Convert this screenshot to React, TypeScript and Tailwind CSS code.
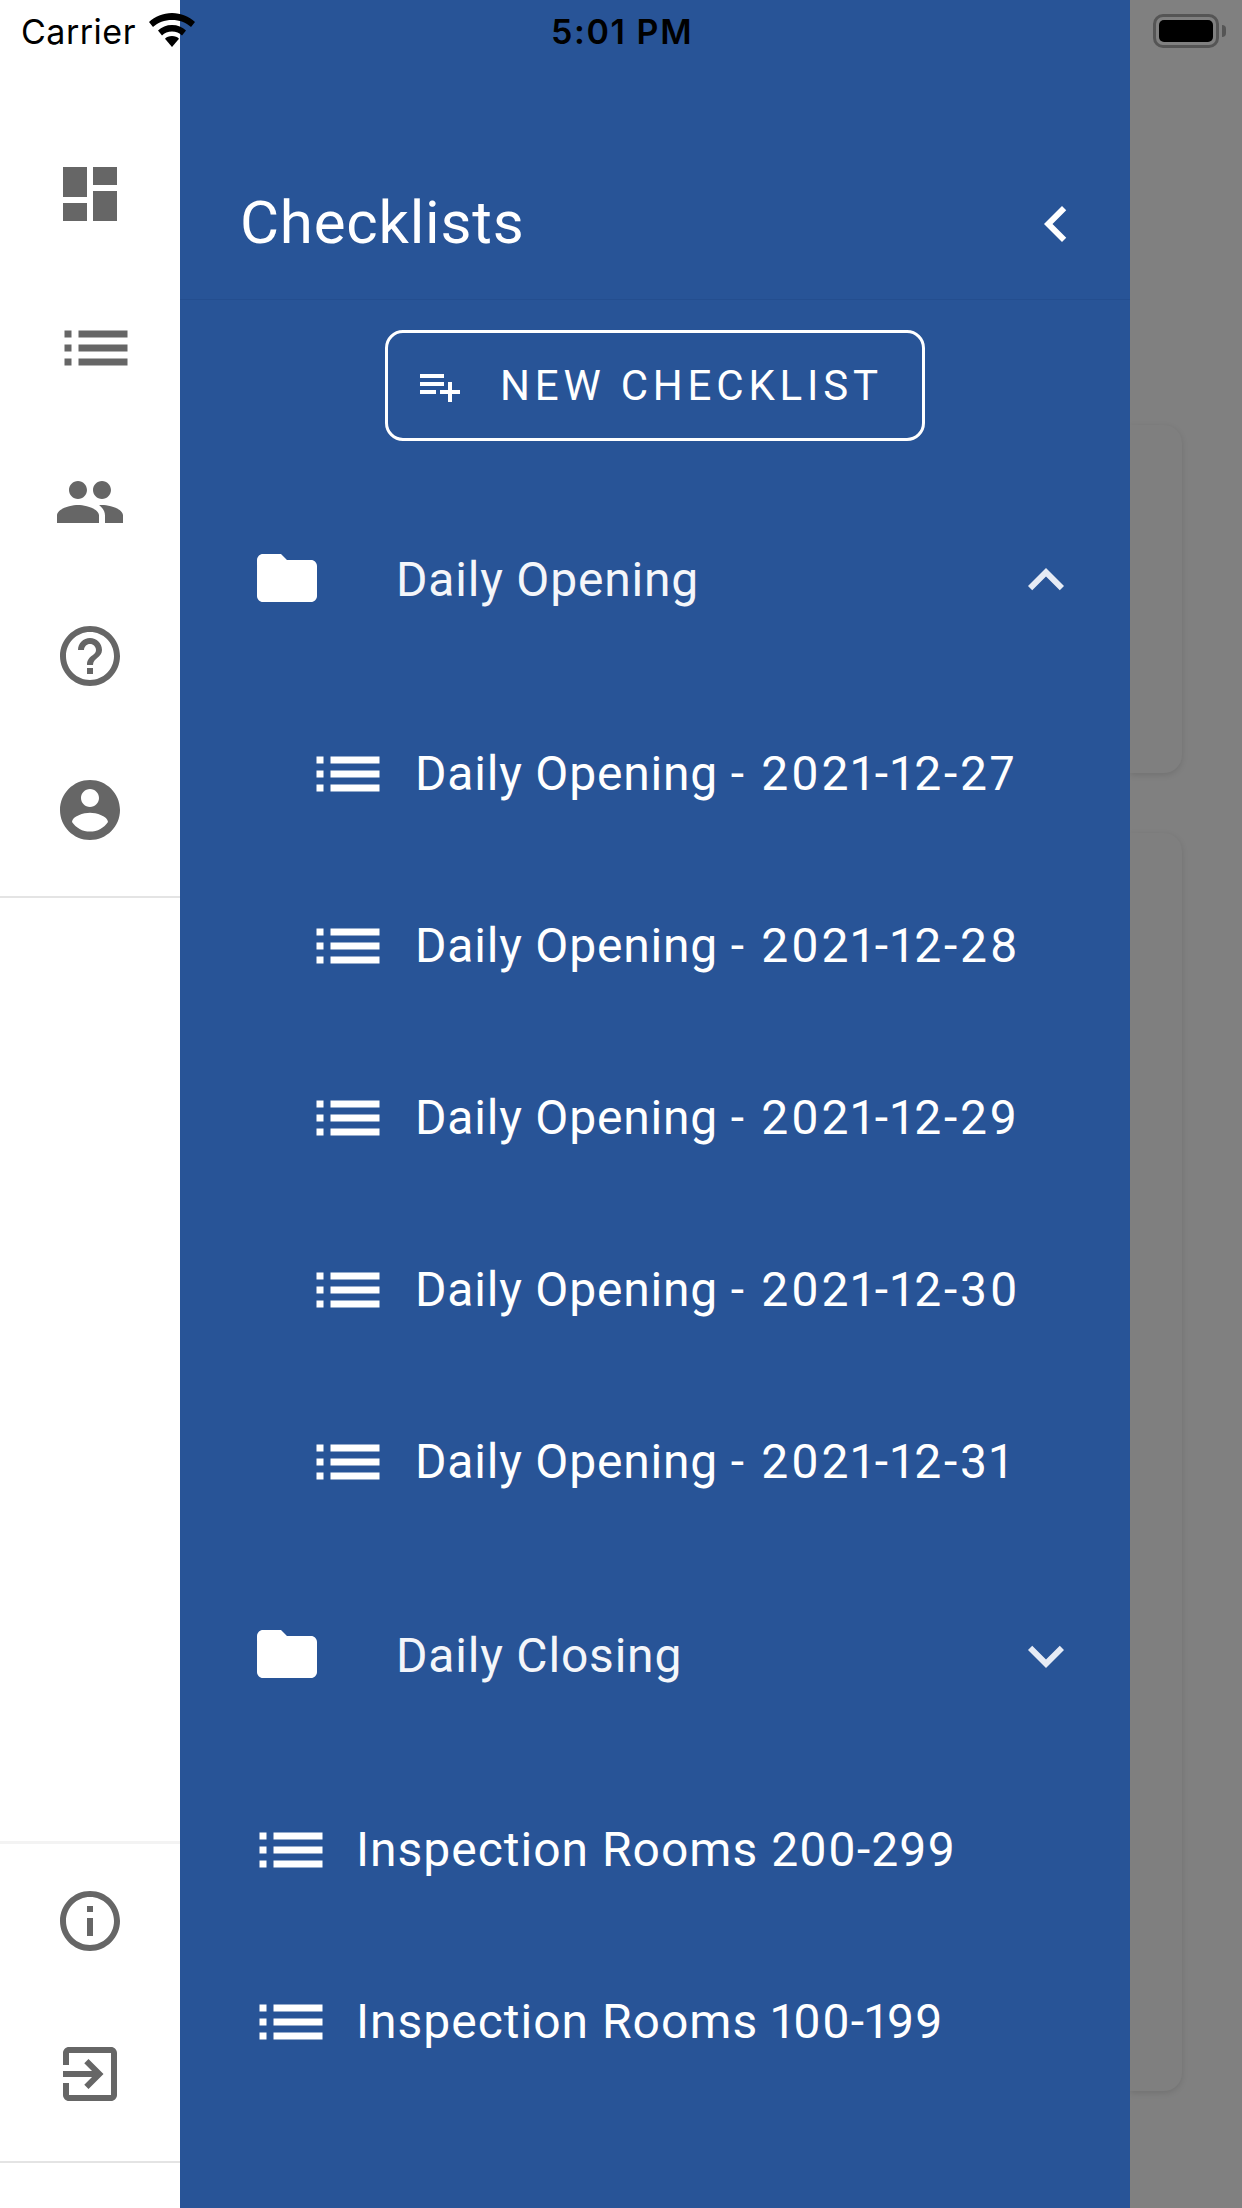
import React from 'react'

const ICONS = {
  dashboard: 'M3 13h8V3H3v10zm0 8h8v-6H3v6zm10 0h8V11h-8v10zm0-18v6h8V3h-8z',
  list: 'M3 13h2v-2H3v2zm0 4h2v-2H3v2zm0-8h2V7H3v2zm4 4h14v-2H7v2zm0 4h14v-2H7v2zM7 7v2h14V7H7z',
  people: 'M16 11c1.66 0 2.99-1.34 2.99-3S17.66 5 16 5c-1.66 0-3 1.34-3 3s1.34 3 3 3zm-8 0c1.66 0 2.99-1.34 2.99-3S9.66 5 8 5C6.34 5 5 6.34 5 8s1.34 3 3 3zm0 2c-2.33 0-7 1.17-7 3.5V19h14v-2.5c0-2.33-4.67-3.5-7-3.5zm8 0c-.29 0-.62.02-.97.05 1.16.84 1.97 1.97 1.97 3.45V19h6v-2.5c0-2.33-4.67-3.5-7-3.5z',
  help: 'M11 18h2v-2h-2v2zm1-16C6.48 2 2 6.48 2 12s4.48 10 10 10 10-4.48 10-10S17.52 2 12 2zm0 18c-4.41 0-8-3.59-8-8s3.59-8 8-8 8 3.59 8 8-3.59 8-8 8zm0-14c-2.21 0-4 1.79-4 4h2c0-1.1.9-2 2-2s2 .9 2 2c0 2-3 1.75-3 5h2c0-2.25 3-2.5 3-5 0-2.21-1.79-4-4-4z',
  account: 'M12 2C6.48 2 2 6.48 2 12s4.48 10 10 10 10-4.48 10-10S17.52 2 12 2zm0 3c1.66 0 3 1.34 3 3s-1.34 3-3 3-3-1.34-3-3 1.34-3 3-3zm0 14.2c-2.5 0-4.71-1.28-6-3.22.03-1.99 4-3.08 6-3.08 1.99 0 5.97 1.09 6 3.08-1.29 1.94-3.5 3.22-6 3.22z',
  info: 'M11 7h2v2h-2zm0 4h2v6h-2zm1-9C6.48 2 2 6.48 2 12s4.48 10 10 10 10-4.48 10-10S17.52 2 12 2zm0 18c-4.41 0-8-3.59-8-8s3.59-8 8-8 8 3.59 8 8-3.59 8-8 8z',
  exit: 'M10.09 15.59L11.5 17l5-5-5-5-1.41 1.41L12.67 11H3v2h9.67l-2.58 2.59zM19 3H5c-1.11 0-2 .9-2 2v4h2V5h14v14H5v-4H3v4c0 1.1.89 2 2 2h14c1.1 0 2-.9 2-2V5c0-1.1-.9-2-2-2z',
  folder: 'M10 4H4c-1.1 0-1.99.9-1.99 2L2 18c0 1.1.9 2 2 2h16c1.1 0 2-.9 2-2V8c0-1.1-.9-2-2-2h-8l-2-2z',
  expandLess: 'M12 8l-6 6 1.41 1.41L12 10.83l4.59 4.58L18 14z',
  expandMore: 'M16.59 8.59L12 13.17 7.41 8.59 6 10l6 6 6-6z',
  chevronLeft: 'M15.41 7.41L14 6l-6 6 6 6 1.41-1.41L10.83 12z',
  playlistAdd: 'M14 10H2v2h12v-2zm0-4H2v2h12V6zm4 8v-4h-2v4h-4v2h4v4h2v-4h4v-2h-4zM2 16h8v-2H2v2z',
}

const Icon = ({ d, className }: { d: string; className: string }) => (
  <svg viewBox="0 0 24 24" fill="currentColor" className={className}>
    <path d={d} />
  </svg>
)

const RailItem = ({ d, size = 'w-[72px] h-[72px]', height = 'h-[154px]' }: { d: string; size?: string; height?: string }) => (
  <div className={height + ' flex items-center justify-center'}>
    <Icon d={d} className={size + ' text-[#666666]'} />
  </div>
)

const Rail = () => (
  <div className="flex w-[180px] shrink-0 flex-col bg-white">
    <div className="pt-[117px] pb-[9px] border-b-2 border-[#e4e4e4]">
      <RailItem d={ICONS.dashboard} />
      <RailItem d={ICONS.list} size="w-[84px] h-[84px] ml-[12px]" />
      <RailItem d={ICONS.people} />
      <RailItem d={ICONS.help} />
      <RailItem d={ICONS.account} />
    </div>
    <div className="flex-1" />
    <div className="border-t-[3px] border-b-2 border-t-[#f3f3f3] border-b-[#e4e4e4] pb-[11px]">
      <RailItem d={ICONS.info} height="h-[153px]" />
      <RailItem d={ICONS.exit} height="h-[153px]" />
    </div>
    <div className="h-[45px]" />
  </div>
)

const Folder = ({ name, open }: { name: string; open?: boolean }) => (
  <div className="flex h-[172px] items-center pl-[71px] pr-[48px]">
    <Icon d={ICONS.folder} className="h-[72px] w-[72px] text-white" />
    <span className="ml-[73px] flex-1 pt-[3px] text-[48px] tracking-[0.8px] text-[#f4f6fa]">{name}</span>
    <Icon d={open ? ICONS.expandLess : ICONS.expandMore} className="mt-[3px] h-[72px] w-[72px] text-[#e6ebf5]" />
  </div>
)

const DatedChecklist = ({ date }: { date: string }) => (
  <div className="flex h-[172px] items-center pl-[126px]">
    <Icon d={ICONS.list} className="h-[84px] w-[84px] text-white" />
    <span className="ml-[25px] text-[48px] tracking-[0.8px] proportional-nums text-white">
      Daily Opening <span className="tracking-[2.7px]">- {date}</span>
    </span>
  </div>
)

const Checklist = ({ name }: { name: string }) => (
  <div className="flex h-[172px] items-center pl-[69px]">
    <Icon d={ICONS.list} className="h-[84px] w-[84px] text-white" />
    <span className="ml-[23px] text-[48px] tracking-[1px] proportional-nums text-white">{name}</span>
  </div>
)

const Drawer = () => (
  <div className="relative z-10 flex w-[950px] shrink-0 flex-col bg-[#285497]">
    <div className="flex h-[300px] items-end border-b border-[#244e8f] pb-[39px] pl-[60px] pr-[38px]">
      <h1 className="flex-1 text-[60px] font-[450] leading-[74px] tracking-[0.8px] text-white">Checklists</h1>
      <Icon d={ICONS.chevronLeft} className="h-[72px] w-[72px] text-white" />
    </div>
    <div className="mt-[30px] flex justify-center">
      <button className="flex h-[111px] w-[540px] items-center rounded-[18px] border-[3px] border-white pl-[28px] text-[42px] tracking-[4.8px] text-white">
        <Icon d={ICONS.playlistAdd} className="h-[48px] w-[48px]" />
        <span className="ml-[36px]">NEW CHECKLIST</span>
      </button>
    </div>
    <div className="mt-[51px]">
      <Folder name="Daily Opening" open />
    </div>
    <div className="mt-[24px]">
      <DatedChecklist date="2021-12-27" />
      <DatedChecklist date="2021-12-28" />
      <DatedChecklist date="2021-12-29" />
      <DatedChecklist date="2021-12-30" />
      <DatedChecklist date="2021-12-31" />
    </div>
    <div className="mt-[20px]">
      <Folder name="Daily Closing" />
    </div>
    <div className="mt-[24px]">
      <Checklist name="Inspection Rooms 200-299" />
      <Checklist name="Inspection Rooms 100-199" />
    </div>
  </div>
)

const Backdrop = () => (
  <div className="flex flex-1 flex-col gap-[60px] bg-[#808080] pr-[60px] pt-[425px]">
    <div className="h-[348px] rounded-r-[18px] bg-[#7f7f7f] shadow-[0_2px_6px_rgba(0,0,0,0.12)]" />
    <div className="h-[1258px] rounded-r-[18px] bg-[#7f7f7f] shadow-[0_2px_6px_rgba(0,0,0,0.12)]" />
  </div>
)

const StatusBar = () => (
  <div className="absolute inset-x-0 top-0 z-20 h-[60px] text-[34px] text-black" style={{ fontFamily: 'Inter, sans-serif' }}>
    <span className="absolute left-[21px] top-[11px] leading-[42px] tracking-[0.5px]">Carrier</span>
    <svg viewBox="0 0 46 34" className="absolute left-[149px] top-[13px] h-[34px] w-[46px]" fill="black">
      <path d="M23 0C14 0 6 3.5 0 9l4 5c5-4.500 11.500-7 19-7s14 2.500 19 7l4-5C40 3.500 32 0 23 0z" />
      <path d="M23 12c-5.500 0-10.500 2-14 5.500l4 5c2.500-2.500 6-4 10-4s7.500 1.500 10 4l4-5C33.500 14 28.500 12 23 12z" />
      <path d="M23 23c-3 0-5.500 1-7 2.800L23 34l7-8.200C28.500 24 26 23 23 23z" />
    </svg>
    <span className="absolute left-[551px] top-[11px] font-semibold leading-[42px] tracking-[1.6px]">5:01 PM</span>
    <div className="absolute left-[1153px] top-[14px] flex h-[34px] w-[66px] items-center justify-center rounded-[10px] border-[3px] border-[#555555]">
      <div className="h-[22px] w-[54px] rounded-[5px] bg-black" />
    </div>
    <div className="absolute left-[1222px] top-[25px] h-[12px] w-[4px] rounded-r-[4px] bg-[#555555]" />
  </div>
)

export default function App() {
  return (
    <div className="relative flex h-[2208px] w-[1242px] overflow-hidden" style={{ fontFamily: 'Roboto, sans-serif' }}>
      <StatusBar />
      <Rail />
      <Drawer />
      <Backdrop />
    </div>
  )
}
